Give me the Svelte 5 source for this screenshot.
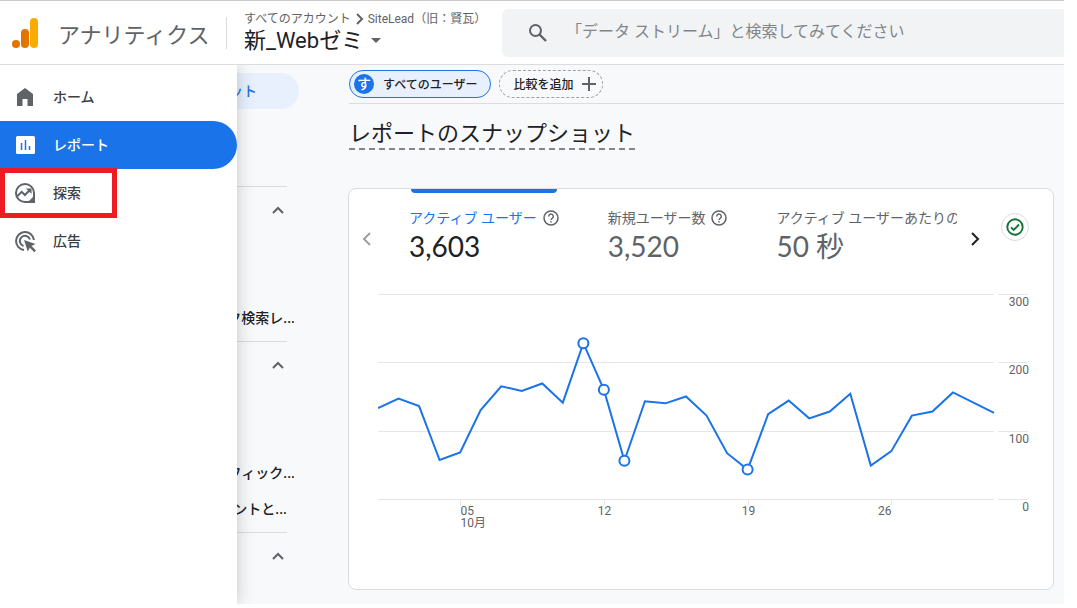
<script lang="ts">
	type Point = { x: number; y: number };

	const drawerItems = [
		{ id: 'home', label: 'ホーム' },
		{ id: 'reports', label: 'レポート' },
		{ id: 'explore', label: '探索' },
		{ id: 'ads', label: '広告' }
	];
	let active = $state('reports');

	const sections = [
		{ id: 'acquisition', rows: [{ label: 'ク検索レ...', short: false }] },
		{
			id: 'engagement',
			rows: [
				{ label: 'フィック...', short: false },
				{ label: 'ントと...', short: true }
			]
		},
		{ id: 'tech', rows: [] }
	];

	const metrics = [
		{ label: 'アクティブ ユーザー', value: '3,603', help: true },
		{ label: '新規ユーザー数', value: '3,520', help: true },
		{ label: 'アクティブ ユーザーあたりの', value: '50 秒', help: false }
	];
	let metric = $state(0);

	// daily active users
	const daily = [
		133, 147, 136, 57, 68, 130, 165, 158, 169, 141, 228, 160, 56, 143, 140, 150, 122, 67, 43, 124,
		144, 118, 128, 154, 49, 70, 122, 128, 156, 141, 126
	];
	const flagged = [10, 11, 12, 18];
	const plot = { width: 616, top: 10, height: 205, max: 300 };

	const points: Point[] = daily.map((value, i) => ({
		x: (i * plot.width) / (daily.length - 1),
		y: yOf(value)
	}));
	const line = points.map((p) => `${p.x},${p.y}`).join(' ');
	const gridValues = [300, 200, 100, 0];
	const ticks = [
		{ day: 4, label: '05', anchor: 'start', month: '10月' },
		{ day: 11, label: '12', anchor: 'middle', month: '' },
		{ day: 18, label: '19', anchor: 'middle', month: '' },
		{ day: 25, label: '26', anchor: 'end', month: '' }
	] as const;

	function yOf(value: number) {
		return plot.top + plot.height * (1 - value / plot.max);
	}
	function crisp(value: number) {
		return Math.round(value) + 0.5;
	}
</script>

<div class="page">
	<header class="topbar">
		<a class="brand" href="#home">
			<svg width="26" height="30" viewBox="0 0 26 30" aria-hidden="true">
				<rect x="18" y="0" width="8" height="30" rx="4" fill="#f9ab00" />
				<rect x="9" y="11" width="8" height="19" rx="4" fill="#e37400" />
				<circle cx="4" cy="26" r="4" fill="#e37400" />
			</svg>
			<span>アナリティクス</span>
		</a>
		<div class="account">
			<div class="crumbs">
				<span>すべてのアカウント</span>
				<svg width="9" height="12" viewBox="0 0 9 12" aria-hidden="true">
					<path d="m2 1 5 5-5 5" fill="none" stroke="#5f6368" stroke-width="2" />
				</svg>
				<span>SiteLead（旧：賢瓦）</span>
			</div>
			<button class="property">
				新_Webゼミ
				<svg width="10" height="5" viewBox="0 0 10 5" aria-hidden="true">
					<path d="M0 0h10L5 5z" fill="#5f6368" />
				</svg>
			</button>
		</div>
		<label class="search">
			<svg width="20" height="20" viewBox="0 0 20 20" aria-hidden="true">
				<circle cx="7.500" cy="7.500" r="5.500" fill="none" stroke="#5f6368" stroke-width="2" />
				<path d="m11.500 11.500 6.500 6.500" stroke="#5f6368" stroke-width="2.400" />
			</svg>
			<input
				type="search"
				aria-label="検索"
				placeholder="「データ ストリーム」と検索してみてください"
			/>
		</label>
	</header>

	<div class="body">
		<aside class="reports-nav">
			<a class="pill" href="#snapshot">ット</a>
			{#each sections as section (section.id)}
				<div class="section">
					<button class="toggle" aria-label={section.id}>
						<svg width="12" height="8" viewBox="0 0 12 8" aria-hidden="true">
							<path d="m1 7 5-5 5 5" fill="none" stroke="#5f6368" stroke-width="2" />
						</svg>
					</button>
					{#if section.rows.length}
						<div class="rows">
							{#each section.rows as row (row.label)}
								<a class="row" class:short={row.short} href="#{section.id}">{row.label}</a>
							{/each}
						</div>
					{/if}
				</div>
			{/each}
		</aside>

		<main>
			<div class="filters">
				<button class="chip selected"><span class="avatar">す</span><span>すべてのユーザー</span></button>
				<button class="chip add">
					<span>比較を追加</span>
					<svg width="14" height="14" viewBox="0 0 14 14" aria-hidden="true">
						<path d="M7 0v14M0 7h14" stroke="#5f6368" stroke-width="2" />
					</svg>
				</button>
			</div>

			<h1>レポートのスナップショット</h1>

			<section class="card">
				<div class="card-head">
					<button class="arrow" aria-label="前へ">
						<svg width="10" height="14" viewBox="0 0 10 14" aria-hidden="true">
							<path d="M8 1 2 7l6 6" fill="none" stroke="#9aa0a6" stroke-width="2" />
						</svg>
					</button>
					<div class="metrics">
						{#each metrics as item, i (item.label)}
							<button class="metric" class:on={metric === i} onclick={() => (metric = i)}>
								<span class="metric-label">
									{item.label}
									{#if item.help}
										<svg width="16" height="16" viewBox="0 0 16 16" aria-hidden="true">
											<circle cx="8" cy="8" r="7" fill="none" stroke="#5f6368" stroke-width="1.500" />
											<path
												d="M5.700 6.400a2.300 2.300 0 1 1 3.600 1.900C8.400 8.900 8 9.200 8 10"
												fill="none"
												stroke="#5f6368"
												stroke-width="1.400"
											/>
											<rect x="7.300" y="11" width="1.400" height="1.500" fill="#5f6368" />
										</svg>
									{/if}
								</span>
								<span class="metric-value">{item.value}</span>
							</button>
						{/each}
					</div>
					<button class="arrow" aria-label="次へ">
						<svg width="10" height="14" viewBox="0 0 10 14" aria-hidden="true">
							<path d="m2 1 6 6-6 6" fill="none" stroke="#202124" stroke-width="2" />
						</svg>
					</button>
					<button class="status" aria-label="データの品質">
						<svg width="18" height="18" viewBox="0 0 18 18" aria-hidden="true">
							<circle cx="9" cy="9" r="7.700" fill="none" stroke="#137333" stroke-width="1.900" />
							<path d="m5 9.300 2.700 2.700L13 6.500" fill="none" stroke="#137333" stroke-width="1.900" />
						</svg>
					</button>
				</div>

				<svg class="chart" viewBox="0 0 652 260" role="img" aria-label="アクティブ ユーザー">
					{#each gridValues as value (value)}
						{@const y = crisp(yOf(value))}
						<path class="grid" d="M0 {y}H616M620 {y}H650" />
						<text x="651" y={y + 11} text-anchor="end">{value}</text>
					{/each}
					{#each ticks as tick (tick.day)}
						{@const x = crisp(points[tick.day].x)}
						<path class="grid" d="M{x} 215v6" />
						<text {x} y="231" text-anchor={tick.anchor}>{tick.label}</text>
						{#if tick.month}
							<text {x} y="243">{tick.month}</text>
						{/if}
					{/each}
					<polyline points={line} />
					{#each flagged as i (i)}
						<circle cx={points[i].x} cy={points[i].y} r="5" />
					{/each}
				</svg>
			</section>
		</main>

		<nav class="drawer">
			{#each drawerItems as item (item.id)}
				<a
					class="drawer-item"
					class:active={active === item.id}
					href="#{item.id}"
					onclick={() => (active = item.id)}
				>
					<svg width="22" height="22" viewBox="0 0 22 22" aria-hidden="true">
						{#if item.id === 'home'}
							<path d="M3 20V8l8-6 8 6v12h-5.500v-7h-5v7z" fill="currentColor" />
						{:else if item.id === 'reports'}
							<rect x="2" y="2" width="19" height="18" rx="1.500" fill="currentColor" />
							<path d="M7.500 9v7M11.500 6v10M15.500 12v4" stroke="#1a73e8" stroke-width="1.500" />
						{:else if item.id === 'explore'}
							<path
								d="M20 11v9h-9a9 9 0 1 1 9-9z"
								fill="none"
								stroke="currentColor"
								stroke-width="2"
							/>
							<path d="M15 19.500 19.500 15v5z" fill="currentColor" stroke="currentColor" />
							<path
								d="m3.500 14 4.200-4.200 3.200 3.200 5-5"
								fill="none"
								stroke="currentColor"
								stroke-width="2"
							/>
							<path d="M12 6.500h5.500V12z" fill="currentColor" />
						{:else}
							<path
								d="M10 20a9 9 0 1 1 10-10M9.500 16a5.200 5.200 0 1 1 6.500-6.500"
								fill="none"
								stroke="currentColor"
								stroke-width="2"
							/>
							<path d="m10 10 11.500 4-4 2 4.500 4.500-1.700 1.700-4.500-4.500-2 3.800z" fill="currentColor" />
						{/if}
					</svg>
					<span>{item.label}</span>
				</a>
				{#if item.id === 'explore'}
					<div class="marker-row"><span class="marker"></span></div>
				{/if}
			{/each}
		</nav>
	</div>
</div>

<style>
	:global(body) {
		margin: 0;
		background: #fff;
	}
	.page {
		margin: 0 13px 4px 0;
		font-family: Roboto, 'Noto Sans CJK JP', sans-serif;
		font-size: 14px;
		color: #202124;
	}
	.page :global(*) { box-sizing: border-box; }
	button {
		padding: 0;
		border: 0;
		background: none;
		font: inherit;
		color: inherit;
		cursor: pointer;
	}
	a { color: inherit; text-decoration: none; }
	svg { flex-shrink: 0; }

	.topbar {
		display: flex;
		align-items: center;
		height: 65px;
		border-top: 1px solid #c8c9cb;
		border-bottom: 1px solid #dadce0;
	}
	.brand {
		display: flex;
		align-items: center;
		gap: 20px;
		width: 226px;
		padding-left: 12px;
		font-size: 22px;
		color: #5f6368;
		white-space: nowrap;
	}
	.account {
		width: 276px;
		padding: 0 0 2px 17px;
		border-left: 1px solid #dadce0;
		height: 32px;
		display: flex;
		flex-direction: column;
		justify-content: center;
		white-space: nowrap;
	}
	.crumbs {
		display: flex;
		align-items: center;
		gap: 4px;
		font-size: 12px;
		line-height: 18px;
		color: #5f6368;
	}
	.property {
		display: flex;
		align-items: center;
		gap: 8px;
		font-size: 22px;
		line-height: 26px;
	}
	.search {
		flex: 1;
		display: flex;
		align-items: center;
		gap: 18px;
		height: 48px;
		padding-left: 26px;
		border-radius: 6px 0 0 6px;
		background: #f1f3f4;
	}
	.search input {
		flex: 1;
		min-width: 0;
		padding: 0 0 2px;
		border: 0;
		outline: 0;
		background: none;
		font: inherit;
		font-size: 16px;
	}
	.search input::placeholder { color: #80868b; }

	.body {
		position: relative;
		display: flex;
		overflow: hidden;
		background: #f8f9fb;
	}
	.reports-nav {
		width: 299px;
		flex-shrink: 0;
		padding-top: 8px;
		font-weight: 500;
		text-align: right;
	}
	.pill {
		display: block;
		margin-bottom: 77px;
		padding-right: 42px;
		border-radius: 0 18px 18px 0;
		background: #e8f0fe;
		line-height: 36px;
		color: #1a73e8;
	}
	.section {
		margin-right: 12px;
		border-top: 1px solid #dadce0;
	}
	.toggle {
		display: flex;
		align-items: center;
		justify-content: center;
		width: 18px;
		height: 46px;
		margin-left: auto;
	}
	.rows {
		padding: 67px 0 5px;
		margin-right: -8px;
	}
	.row {
		display: block;
		line-height: 36px;
	}
	.row.short { padding-right: 8px; }

	main {
		flex: 1;
		min-width: 0;
		padding: 0 0 14px 49px;
	}
	.filters {
		display: flex;
		gap: 8px;
		padding: 5px 0;
		border-bottom: 1px solid #dadce0;
		margin-left: 1px;
	}
	.chip {
		display: flex;
		align-items: center;
		gap: 9px;
		height: 28px;
		border-radius: 14px;
		font-size: 12px;
		font-weight: 500;
	}
	.chip span { padding-bottom: 2px; }
	.selected {
		padding: 0 13px 0 4px;
		border: 1px solid #1a73e8;
		background: #e8f0fe;
	}
	.chip .avatar {
		width: 20px;
		height: 20px;
		padding: 0;
		border-radius: 50%;
		background: #1a73e8;
		font-size: 14px;
		line-height: 20px;
		color: #fff;
	}
	.add {
		padding: 0 6px 0 13px;
		border: 1px dashed #9aa0a6;
	}
	h1 {
		width: fit-content;
		margin: 15px 0 38px 1px;
		border-bottom: 2px dashed #80868b;
		font-size: 22px;
		font-weight: 400;
		line-height: 29px;
	}

	.card {
		margin-right: 10px;
		padding-bottom: 45px;
		border: 1px solid #dadce0;
		border-radius: 8px;
		background: #fff;
	}
	.card-head {
		display: flex;
		height: 95px;
	}
	.arrow {
		display: flex;
		align-items: center;
		justify-content: center;
		width: 36px;
		height: 100px;
	}
	.metrics {
		flex: 1;
		min-width: 0;
		display: flex;
		gap: 49px;
		margin-left: 24px;
		overflow: hidden;
		white-space: nowrap;
	}
	.metric {
		display: flex;
		flex-direction: column;
		flex-shrink: 0;
		padding-top: 15px;
		border-top: 4px solid transparent;
		text-align: left;
		color: #5f6368;
		position: relative;
	}
	.metric.on { color: #202124; }
	.metric.on::before {
		content: '';
		position: absolute;
		inset: -4px 2px auto;
		height: 4px;
		border-radius: 0 0 4px 4px;
		background: #1a73e8;
	}
	.metric-label {
		display: flex;
		align-items: center;
		gap: 6px;
		line-height: 20px;
	}
	.metric.on .metric-label { color: #1a73e8; }
	.metric-value {
		font-family: Lato, 'Noto Sans CJK JP', sans-serif;
		font-size: 28px;
		line-height: 36px;
	}
	.status {
		display: flex;
		align-items: center;
		justify-content: center;
		width: 28px;
		height: 28px;
		margin: 24px 24px 0 8px;
		border: 1px solid #dadce0;
		border-radius: 50%;
	}

	.chart {
		display: block;
		width: calc(100% - 52px);
		margin-left: 29px;
	}
	.chart text {
		font-size: 12px;
		fill: #5f6368;
	}
	.grid {
		fill: none;
		stroke: #e6e6e6;
	}
	polyline {
		fill: none;
		stroke: #1a73e8;
		stroke-width: 2;
	}
	.chart circle {
		fill: #fff;
		stroke: #1a73e8;
		stroke-width: 2;
	}

	/* the open drawer lies over the report navigation */
	.drawer {
		position: absolute;
		inset: 0 auto 0 0;
		width: 237px;
		padding-top: 8px;
		background: #fff;
		box-shadow: 0 0 16px rgba(60, 64, 67, 0.28);
	}
	.drawer-item {
		display: flex;
		align-items: center;
		gap: 17px;
		height: 48px;
		padding-left: 14px;
		border-radius: 0 24px 24px 0;
		font-weight: 500;
		color: #3c4043;
	}
	.drawer-item span { padding-bottom: 2px; }
	.drawer-item svg { color: #5f6368; }
	.drawer-item.active {
		background: #1a73e8;
		color: #fff;
	}
	.drawer-item.active svg { color: #fff; }
	.marker-row { position: relative; }
	.marker {
		position: absolute;
		left: 0;
		bottom: -1px;
		width: 117px;
		height: 50px;
		border: 5px solid #ed1c24;
		pointer-events: none;
	}
</style>
